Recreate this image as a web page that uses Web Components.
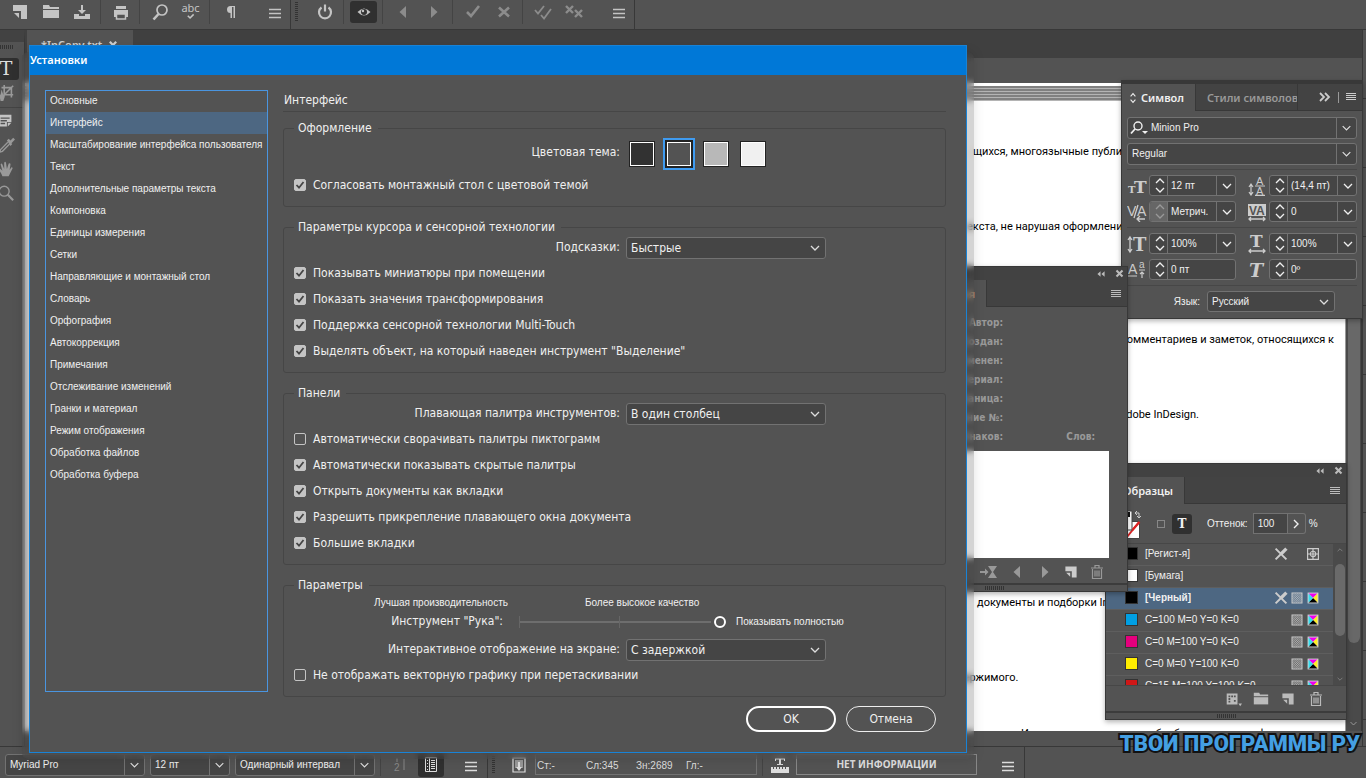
<!DOCTYPE html>
<html lang="ru">
<head>
<meta charset="utf-8">
<title>Установки — InCopy</title>
<style>
html, body { margin: 0; height: 100%; overflow: hidden; background: #535353; }
body { font: 10px/16px "Liberation Sans", sans-serif; color: #f0f0f0; }
</style>
</head>
<body>
<copy-app></copy-app>
<script>
/* Registers an element whose shadow root holds the given styles and markup. */
function define(name, css, html) {
  customElements.define(name, class extends HTMLElement {
    connectedCallback() {
      if (this.shadowRoot) return;
      const root = this.attachShadow({ mode: 'open' });
      root.innerHTML = `<style>
        *, :host { box-sizing: border-box; }
        :host { display: block; }
        button { font: inherit; color: inherit; background: none; border: 0; padding: 0; margin: 0; }
        ul { list-style: none; margin: 0; padding: 0; }
        ${css}</style>` + (typeof html === 'function' ? html(this) : html);
    }
  });
}

const ICONS = {
  page: '<path fill="currentColor" d="M3 3h14v14h-6V9H3z"/><path fill="currentColor" d="M4 11h5v5z"/>',
  folder: '<path fill="currentColor" d="M2 3h6l1 2h9v2H2z"/><path fill="currentColor" d="M2 8h16v8H2z"/>',
  save: '<path fill="currentColor" d="M2 12h5v2h6v-2h5v5H2z"/><path fill="currentColor" d="M9 3h2v5h3l-4 4-4-4h3z"/>',
  print: '<path fill="currentColor" d="M5 4h10v3H5zM3 8h14v7h-2v-3H5v3H3z"/><path fill="none" stroke="currentColor" stroke-width="1.500" d="M5.500 12h9v5h-9z"/>',
  search: '<circle cx="12" cy="8" r="5" fill="none" stroke="currentColor" stroke-width="1.700"/><path stroke="currentColor" stroke-width="2.600" d="M8.500 12L3.500 17.500"/>',
  find: '<circle cx="9" cy="8" r="4" fill="none" stroke="currentColor" stroke-width="1.400"/><path stroke="currentColor" stroke-width="1.800" d="M6 11l-4 4.500"/><path fill="currentColor" d="M13 13h6l-3 3z"/>',
  zoom: '<circle cx="8" cy="8" r="5.500" fill="none" stroke="currentColor" stroke-width="1.500"/><path stroke="currentColor" stroke-width="2.400" d="M12 12l6 6"/>',
  check: '<path fill="none" stroke="currentColor" stroke-width="2.600" d="M4 10l4 4 8-10"/>',
  tick: '<path fill="none" stroke="currentColor" stroke-width="3.500" d="M4 6l5 5 8-8"/>',
  cross: '<path fill="none" stroke="currentColor" stroke-width="2.600" d="M5 5.500l10 9M15 5.500l-10 9"/>',
  checks: '<path fill="none" stroke="currentColor" stroke-width="1.800" d="M2 8l3 3.500L11 4M8 13l3 3.500L18 7"/>',
  crosses: '<path fill="none" stroke="currentColor" stroke-width="2.400" d="M2 4l7 7M9 4l-7 7M11 8l7 7M18 8l-7 7"/>',
  pilcrow: '<path fill="currentColor" d="M15 4v12h-1.500V5H12v11h-1.500v-5A3.500 3.500 0 0 1 10.500 4z"/>',
  menu: '<path stroke="currentColor" stroke-width="1.300" d="M4 7.500h12M4 11.500h12M4 15.500h12"/>',
  lines: '<path stroke="currentColor" stroke-width="1" d="M5 6.500h10M5 8.500h10M5 10.500h10M5 12.500h10"/>',
  power: '<path fill="none" stroke="currentColor" stroke-width="2.200" d="M6.500 5.500a6 6 0 1 0 7 0M10 2.500v7"/>',
  eye: '<path fill="currentColor" d="M3.500 10Q10 3 16.500 10 10 17 3.500 10z"/><circle cx="10" cy="10" r="3" fill="#333"/><circle cx="9" cy="9" r="1.200" fill="currentColor"/>',
  left: '<path fill="currentColor" d="M13 4v12L6.500 10z"/>',
  right: '<path fill="currentColor" d="M7 4v12l6.500-6z"/>',
  chevron: '<path fill="none" stroke="currentColor" stroke-width="1.300" d="M6 8l4 4 4-4"/>',
  up: '<path fill="none" stroke="currentColor" stroke-width="1.300" d="M6 12l4-4 4 4"/>',
  next: '<path fill="none" stroke="currentColor" stroke-width="1.400" d="M8 6l4 4-4 4"/>',
  collapse: '<path fill="currentColor" d="M9.500 7v6L6 10zM14 7v6l-3.500-3z"/>',
  expand: '<path fill="none" stroke="currentColor" stroke-width="1.800" d="M5 6l4 4-4 4M10 6l4 4-4 4"/>',
  trash: '<path fill="none" stroke="currentColor" stroke-width="1.200" d="M5.500 7v9.500h9V7M4 6h12M8 5.500v-2h4v2M8 8.500v6M10 8.500v6M12 8.500v6"/>',
  merge: '<path fill="currentColor" d="M1 9h5V6.500L9.500 10 6 13.500V11H1zM9 4h9l-4 6 4 6H9l4-6z"/>',
  grid: '<path fill="currentColor" fill-rule="evenodd" d="M3 4h12v12H3zM5 6v2h2V6zm3 0v2h2V6zm3 0v2h2V6zM5 9v2h2V9zm0 3v2h2v-2zm6-1v2h2v-2z"/><path fill="currentColor" d="M16 15h4l-2 3z"/>',
  note: '<path fill="currentColor" fill-rule="evenodd" d="M2 3h14v8h-5v5H2zM4 6v1.500h10V6zm0 3v1.500h7V9zm0 3v1.500h5V12z"/><path fill="currentColor" d="M12 12h4l-4 4z"/>',
  dropper: '<path fill="currentColor" d="M11 5l2-2 2 2 3-3 2 2-4 4 1 1-2 2z"/><path fill="none" stroke="currentColor" stroke-width="1.500" d="M12 7l-8 8-1 3 3-1 8-8"/>',
  hand: '<path fill="currentColor" d="M6 18Q4 13 1 10q1-2 3 0l2 2L4 5q1-2 2 0l2 5V3q1-2 2 0l1 7 2-6q2-1 2 1l-1 6 2-3q2 0 1 2-2 4-4 8z"/>',
  crop: '<path fill="none" stroke="currentColor" stroke-width="1.800" d="M8 1v11h10M5 4h11v11M18 2L8 12"/><path fill="currentColor" d="M4 19Q3 13 1 10l3 2 1-6 2 6 2-2q0 5-2 9z"/>',
  dots: '<path fill="none" stroke="currentColor" stroke-width="1" d="M4.500 2.500h11v14h-11zM8.500 3v13"/><path stroke="currentColor" stroke-width="1" d="M6 5.500h1M6 8.500h1M6 11.500h1M6 14.500h1M10 5.500h4M10 7.500h4M10 9.500h4M10 11.500h4M10 13.500h4"/>',
  depth: '<path fill="none" stroke="currentColor" stroke-width="1.200" d="M4 3h12v14H4zM6 6h8M6 8h8M6 10h8M6 12h8"/><path fill="currentColor" d="M9 7h2v5h2l-3 4-3-4h2z"/>',
  ruler: '<path fill="currentColor" d="M1 12h2v2h1v-2h2v2h1v-2h2v2h1v-2h2v2h1v-2h2v2h1v-2h3v6H1zM5 3h10v3h-1V4.500h-3V9h2v1H7V9h2V4.500H6V6H5z"/>',
  half: '<text x="4" y="16" font-size="10" fill="currentColor">2</text><path stroke="currentColor" d="M7 3v4M14 4v11"/>',
  type: '<text x="10" y="16" text-anchor="middle" font-family="DejaVu Serif, serif" font-size="19" fill="currentColor">T</text>',
  size: '<text x="1" y="17" font-family="DejaVu Serif, serif" font-size="10" font-weight="700" fill="currentColor">T</text><text x="7" y="17" font-family="DejaVu Serif, serif" font-size="17" font-weight="700" fill="currentColor">T</text>',
  leading: '<text x="9" y="9" font-size="11" fill="currentColor">A</text><text x="9" y="19" font-size="11" fill="currentColor">A</text><path fill="none" stroke="currentColor" stroke-width="1.200" d="M8 10h10M8 19.400h10M4 9v9M2 11l2-3 2 3M2 16l2 3 2-3"/>',
  kern: '<text x="0" y="14" font-size="14" fill="currentColor">V</text><text x="10" y="14" font-size="14" fill="currentColor">A</text><path fill="none" stroke="currentColor" stroke-width="1.300" d="M11 3L7 16M18 17h-7M13 14l-3 3 3 3"/>',
  track: '<path fill="currentColor" d="M1 2h18v12H1z"/><text x="2" y="13" font-size="12" fill="#535353" font-weight="700">VA</text><path fill="none" stroke="currentColor" stroke-width="1.300" d="M2 17h16M4 15l-2 2 2 2M16 15l2 2-2 2"/>',
  vscale: '<text x="6" y="17" font-family="DejaVu Serif, serif" font-size="18" font-weight="700" fill="currentColor">T</text><path fill="none" stroke="currentColor" stroke-width="1.300" d="M3 4v13M1 6l2-3 2 3M1 15l2 3 2-3"/>',
  hscale: '<text x="3" y="13" font-family="DejaVu Serif, serif" font-size="17" font-weight="700" fill="currentColor">T</text><path fill="none" stroke="currentColor" stroke-width="1.300" d="M2 17h16M4 15l-2 2 2 2M16 15l2 2-2 2"/>',
  base: '<text x="1" y="14" font-size="14" fill="currentColor">A</text><text x="12" y="8" font-size="10" fill="currentColor">a</text><path fill="none" stroke="currentColor" stroke-width="1.200" d="M1 16h9M12 10h6M15 18v-6M13 14l2-2 2 2"/>',
  skew: '<text x="2" y="17" font-family="DejaVu Serif, serif" font-size="19" font-weight="700" font-style="italic" fill="currentColor">T</text>',
  nopen: '<path stroke="currentColor" stroke-width="3.600" d="M16 4l-6 6"/><path fill="none" stroke="currentColor" stroke-width="2.200" d="M10 10l-6 6M4 4l12 12"/>',
  target: '<path fill="none" stroke="currentColor" stroke-width="1.300" d="M4 4h12v12H4zM4 10h12M10 4v12"/><circle cx="10" cy="10" r="3" fill="none" stroke="currentColor" stroke-width="1.200"/>',
  tone: '<path fill="none" stroke="currentColor" stroke-width="1.200" d="M4.500 4.500h11v11h-11z"/><path stroke="currentColor" stroke-width="1" stroke-dasharray="1 1" d="M5 6.500h10M5 8.500h10M5 10.500h10M5 12.500h10M5 14.500h10"/><path stroke="currentColor" stroke-width="1" stroke-dasharray="1 1" stroke-dashoffset="1" d="M5 5.500h10M5 7.500h10M5 9.500h10M5 11.500h10M5 13.500h10"/>',
  cmyk: '<path fill="#d8d8d8" d="M4 4h12v12H4z"/><path fill="#e0e" d="M5 5h10l-5 5z"/><path fill="#fe2" d="M15 5v10l-5-5z"/><path d="M5 15h10l-5-5z"/><path fill="#3de" d="M5 5v10l5-5z"/>',
  sort: '<path fill="none" stroke="currentColor" stroke-width="1.300" d="M7 8l3-3.500L13 8M7 12l3 3.500 3-3.500"/>',
  close: '<path fill="none" stroke="currentColor" stroke-width="2.800" d="M6 6l8 8M14 6l-8 8"/>'
};

define('ui-icon', `
  :host { width: var(--icon, 20px); height: var(--icon, 20px); flex: none; }
  svg { display: block; width: 100%; height: 100%; font-family: "Liberation Sans", sans-serif; }
`, el => `<svg viewBox="0 0 20 20" aria-hidden="true">${ICONS[el.getAttribute('name')]}</svg>`);

/* Drop-down list. "split" draws the divider before the arrow. */
define('ui-combo', `
  :host { display: grid; grid-template-columns: 1fr 20px; height: 22px; background: #454545;
    border: 1px solid #727272; border-radius: 3px; overflow: hidden; }
  select { grid-area: 1 / 1 / 2 / 3; appearance: none; font: inherit; color: inherit; background: none;
    border: 0; margin: 0; padding: 0 20px 0 var(--combo-pad, 4px); outline: 0; min-width: 0; }
  option { background: #454545; }
  ui-icon { --icon: 20px; grid-area: 1 / 2; pointer-events: none; color: #ddd; }
  :host([split]) ui-icon { border-left: 1px solid #727272; }
`, el => `<select aria-label="${el.getAttribute('label') || ''}"><option>${el.getAttribute('value')}</option></select>
  <ui-icon name="chevron"></ui-icon>`);

/* Number field with up/down steppers and an optional drop-down. */
define('ui-stepper', `
  :host { display: flex; height: 21px; border: 1px solid #727272; border-radius: 3px; background: #454545; overflow: hidden; }
  button { display: grid; place-items: center; overflow: hidden; min-height: 0; }
  .steps { width: 18px; flex: none; display: flex; flex-direction: column; border-right: 1px solid #727272; }
  .steps button { flex: 1; }
  .steps ui-icon { --icon: 20px; margin: -6px 0; }
  :host([dim]) .steps { background: #666; color: #999; }
  input { flex: 1; min-width: 0; width: 0; font: inherit; color: inherit; background: none; border: 0; padding: 0 0 0 3px; outline: 0; }
  .drop { flex: none; width: 19px; border-left: 1px solid #727272; }
`, el => `<div class="steps"><button aria-label="Увеличить"><ui-icon name="up"></ui-icon></button>
    <button aria-label="Уменьшить"><ui-icon name="chevron"></ui-icon></button></div>
  <input aria-label="${el.getAttribute('label')}" value="${el.getAttribute('value')}">
  ${el.hasAttribute('plain') ? '' : '<button class="drop" aria-label="Список"><ui-icon name="chevron"></ui-icon></button>'}`);

/* ---------- Top toolbar ---------- */
const tool = (n, l, c = '') => `<button class="${c}" aria-label="${l}"><ui-icon name="${n}"></ui-icon></button>`;
define('app-toolbar', `
  :host { display: flex; height: 30px; background: #535353; border-bottom: 1px solid #383838; color: #c4c4c4; padding-left: 4px; }
  button { width: 31px; height: 24px; display: grid; place-items: center; }
  .dim { color: #8c8c8c; }
  .gap { margin-left: 14px; }
  .on { width: 27px; height: 22px; margin: 1px 2px; background: #303030; border-radius: 3px; }
  .spell { font: 11px/14px "Noto Sans", sans-serif; display: flex; flex-direction: column; align-items: center; justify-content: flex-start; padding-top: 1px; }
  .spell ui-icon { --icon: 9px; margin-top: -2px; }
  i { width: 1px; height: 24px; background: #444; margin: 0 4px 0 3px; }
  b { width: 1px; background: #383838; }
  .grip { width: 3px; height: 20px; margin: 2px 11px 0 4px; background: repeating-linear-gradient(#333 0 1px, transparent 1px 2px); }
`, tool('page', 'Создать') + tool('folder', 'Открыть') + tool('save', 'Сохранить') + '<i></i>' + tool('print', 'Печать') + '<i></i>'
  + tool('search', 'Найти') + '<button class="spell" aria-label="Орфография">abc<ui-icon name="tick"></ui-icon></button><i></i>'
  + tool('pilcrow', 'Непечатаемые символы') + tool('menu', 'Меню', 'gap') + '<b></b><span class="grip"></span>'
  + tool('power', 'Отслеживание') + '<i></i>' + tool('eye', 'Показать изменения', 'on') + '<i></i>'
  + tool('left', 'Назад', 'dim') + tool('right', 'Вперед', 'dim') + '<i></i>' + tool('check', 'Принять', 'dim') + tool('cross', 'Отклонить', 'dim')
  + '<i></i>' + tool('checks', 'Принять все', 'dim') + tool('crosses', 'Отклонить все', 'dim') + tool('menu', 'Меню', 'gap') + '<b></b>');

/* ---------- Left tool rail ---------- */
define('tool-rail', `
  :host { width: 25px; background: #535353; border-top: 12px solid #424242; border-right: 1px solid #383838; overflow: hidden; color: #999; }
  .grip { width: 14px; height: 4px; margin: 3px 0 9px; background: repeating-linear-gradient(90deg, #333 0 1px, transparent 1px 2px); }
  button { display: grid; place-items: center; width: 26px; height: 22px; margin: 0 0 2px -7px; --icon: 18px; border-radius: 3px; }
  .on { background: #303030; color: #ddd; --icon: 20px; }
  .lit { color: #c4c4c4; }
  hr { border: 0; border-top: 1px solid #444; margin: 3px 0 2px; }
`, '<div class="grip"></div>' + tool('type', 'Текст', 'on') + tool('crop', 'Позиция') + '<hr>' + tool('note', 'Заметка', 'lit')
  + tool('dropper', 'Пипетка') + tool('hand', 'Рука') + tool('zoom', 'Масштаб'));

/* ---------- Document ---------- */
define('doc-view', `
  :host { display: flex; flex-direction: column; min-width: 0; min-height: 0; }
  .tabs { flex: none; height: 28px; background: #404040; padding-left: 2px; }
  .tab { width: 106px; height: 100%; background: #535353; display: flex; justify-content: space-between; align-items: center;
    padding: 2px 12px 0 14px; font: 600 11px/16px "Noto Sans", sans-serif; color: #ccc; --icon: 16px; }
  .main { flex: 1; min-height: 0; padding: 25px 0 15px; display: grid; grid-template: minmax(0, 1fr) / 1fr 16px; background: #535353; }
  .page { background: #fff; color: #000; padding-top: 3px; overflow: hidden; border-right: 1px solid #999; }
  .edge { height: 15px; background: repeating-linear-gradient(#808080 0 2px, #b4b4b4 2px 3px); }
  p { margin: 0; font: 11px/15px Roboto, sans-serif; white-space: nowrap; padding-left: var(--x); padding-top: var(--y); }
  .bar { background: #4a4a4a; border-right: 1px solid #383838; display: flex; flex-direction: column; align-items: center; }
  .thumb { flex: none; width: 12px; height: 560px; border-radius: 6px; background: #686868; }
  .bar ui-icon { margin-top: auto; color: #999; --icon: 15px; }
`, `<div class="tabs"><div class="tab"><span>*InCopy.txt</span><ui-icon name="close"></ui-icon></div></div>
  <div class="main"><div class="page"><div class="edge"></div>
    <p style="--x:948px;--y:43px">щихся, многоязычные публикации</p>
    <p style="--x:942px;--y:60px">екста, не нарушая оформления</p>
    <p style="--x:1096px;--y:98px">комментариев и заметок, относящихся к</p>
    <p style="--x:1094px;--y:60px">Adobe InDesign.</p>
    <p style="--x:952px;--y:173px">документы и подборки InCopy</p>
    <p style="--x:932px;--y:60px">держимого.</p>
    <p style="--x:996px;--y:41px">Использование средств обработки текстов и форматов</p>
  </div><div class="bar"><div class="thumb"></div><ui-icon name="chevron"></ui-icon></div></div>`);

/* ---------- Floating panels ---------- */
const panelCss = `
  :host { position: absolute; background: #535353; border: 1px solid #383838; box-shadow: 0 2px 5px rgba(0,0,0,.3); }
  header { height: 13px; background: #424242; display: flex; justify-content: flex-end; align-items: center; color: #bbb; --icon: 16px; gap: 2px; }
  header :first-child { --icon: 18px; }
  header :last-child { --icon: 15px; }
  .tabs { display: flex; height: 27px; background: #434343; border-bottom: 1px solid #383838; }
  .tab { background: #535353; height: 27px; display: flex; align-items: center; font: 600 11px/16px "Noto Sans", sans-serif; }
  .tabs .menu { margin: 4px 1px 0 auto; color: #bbb; }
  .grip { border-top: 2px solid #3c3c3c; height: 8px; display: grid; justify-content: center; align-items: center; }
  .grip i { width: 19px; height: 4px; background: repeating-linear-gradient(90deg, #333 0 1px, transparent 1px 2px); }
  footer { display: flex; color: #bbb; }
`;

define('symbol-panel', panelCss + `
  :host { top: 80px; right: 3px; width: 242px; height: 239px; border-top-width: 4px; display: flex; flex-direction: column; }
  .tab { width: 73px; padding-left: 3px; --icon: 16px; }
  .off { background: none; border-right: 1px solid #383838; border-left: 1px solid #383838; width: 103px; padding-left: 11px; color: #999; white-space: nowrap; overflow: hidden; }
  .ctl { margin-left: auto; display: flex; align-items: center; color: #ccc; padding-right: 1px; }
  .ctl .bar { width: 1px; height: 11px; background: #999; margin: 0 2px 0 3px; }
  .body { padding: 6px 5px; }
  .font { display: grid; margin-bottom: 4px; }
  .font ui-combo { grid-area: 1 / 1; }
  .font > ui-icon { grid-area: 1 / 1; z-index: 1; pointer-events: none; align-self: center; margin-left: 2px; }
  .grid { display: grid; grid-template-columns: 18px 87px 25px 88px; column-gap: 4px; row-gap: 5px; align-items: center;
    border-top: 1px solid #474747; padding: 5px 0; --icon: 20px; color: #ccc; }
  .grid ui-stepper { color: #f0f0f0; }
  .grid :nth-child(4n + 3) { margin-left: 7px; }
  .lang { border-top: 1px solid #474747; padding-top: 5px; display: flex; align-items: center; justify-content: flex-end; gap: 7px; padding-right: 22px; }
  .lang ui-combo { width: 128px; height: 21px; }
`, `<div class="tabs"><div class="tab"><ui-icon name="sort"></ui-icon>Символ</div><div class="tab off">Стили символов</div>
    <div class="ctl"><ui-icon name="expand"></ui-icon><span class="bar"></span><ui-icon name="lines"></ui-icon></div></div>
  <div class="body">
    <div class="font" style="--combo-pad:23px"><ui-icon name="find"></ui-icon><ui-combo split label="Шрифт" value="Minion Pro"></ui-combo></div>
    <div class="font"><ui-combo split label="Начертание" value="Regular"></ui-combo></div>
    <div class="grid">
      <ui-icon name="size"></ui-icon><ui-stepper label="Кегль" value="12 пт"></ui-stepper>
      <ui-icon name="leading"></ui-icon><ui-stepper label="Интерлиньяж" value="(14,4 пт)"></ui-stepper>
      <ui-icon name="kern"></ui-icon><ui-stepper dim label="Кернинг" value="Метрич."></ui-stepper>
      <ui-icon name="track"></ui-icon><ui-stepper label="Трекинг" value="0"></ui-stepper>
    </div>
    <div class="grid">
      <ui-icon name="vscale"></ui-icon><ui-stepper label="Масштаб по вертикали" value="100%"></ui-stepper>
      <ui-icon name="hscale"></ui-icon><ui-stepper label="Масштаб по горизонтали" value="100%"></ui-stepper>
      <ui-icon name="base"></ui-icon><ui-stepper plain label="Смещение" value="0 пт"></ui-stepper>
      <ui-icon name="skew"></ui-icon><ui-stepper plain label="Наклон" value="0º"></ui-stepper>
    </div>
    <div class="lang"><span>Язык:</span><ui-combo label="Язык" value="Русский"></ui-combo></div>
  </div>`);

define('info-panel', panelCss + `
  :host { top: 266px; left: 860px; width: 268px; height: 326px; display: flex; flex-direction: column; }
  .tab { width: 126px; border-right: 1px solid #383838; justify-content: flex-end; padding-right: 11px; color: #c8a888; }
  dl { margin: 0; padding: 6px 0 5px; display: grid; grid-template-columns: 142px 92px; font: 700 10px/19px "DejaVu Sans Condensed", sans-serif; color: #999; text-align: right; }
  dt { grid-column: 1; } dt.two { grid-column: 2; }
  textarea { display: block; width: 230px; height: 107px; margin: 0 0 0 18px; border: 0; padding: 0; resize: none; background: #fff; }
  footer { flex: 1; padding: 2px 20px 0 0; justify-content: flex-end; align-items: center; gap: 8px; color: #999; }
  footer :nth-child(4) { color: #ccc; --icon: 16px; }
`, `<header><ui-icon name="collapse"></ui-icon><ui-icon name="close"></ui-icon></header>
  <div class="tabs"><div class="tab">Задания</div><ui-icon class="menu" name="lines"></ui-icon></div>
  <dl><dt>Автор:</dt><dt>Создан:</dt><dt>Изменен:</dt><dt>Материал:</dt><dt>Страница:</dt><dt>Задание №:</dt><dt>Знаков:</dt><dt class="two">Слов:</dt></dl>
  <textarea aria-label="Описание"></textarea>
  <footer><ui-icon name="merge"></ui-icon><ui-icon name="left"></ui-icon><ui-icon name="right"></ui-icon><ui-icon name="page"></ui-icon><ui-icon name="trash"></ui-icon></footer>
  <div class="grip"><i></i></div>`);

const swatch = (c, n, icons, cls = '') => `<li class="${cls}"><i style="background:${c}"></i><span>${n}</span>${icons.split(' ').filter(Boolean).map(x => `<ui-icon name="${x}"></ui-icon>`).join('')}</li>`;
define('swatches-panel', panelCss + `
  :host { top: 463px; right: 19px; width: 242px; height: 257px; display: flex; flex-direction: column; }
  .tab { width: 79px; border-right: 1px solid #383838; justify-content: flex-end; padding-right: 11px; }
  .opts { height: 39px; flex: none; display: flex; align-items: center; padding-left: 5px; }
  .opts svg { width: 32px; height: 30px; }
  .frame { width: 8px; height: 8px; border: 1px solid #888; margin: 0 7px 0 14px; }
  .t { width: 20px; height: 20px; background: #303030; border-radius: 3px; font: 700 12px/20px "DejaVu Serif", serif; text-align: center; margin-right: 15px; }
  input { width: 35px; height: 21px; margin-left: 5px; border: 1px solid #727272; background: #454545; color: inherit; font: inherit; padding: 0 4px; }
  .go { width: 18px; height: 21px; border: 1px solid #727272; border-left: 0; border-radius: 0 3px 3px 0; margin-right: 3px; display: grid; place-items: center; overflow: hidden; }
  .go ui-icon { margin: 0 -2px; }
  .list { flex: 1; min-height: 0; display: flex; border-top: 1px solid #474747; border-bottom: 1px solid #474747; }
  ul { flex: 1; overflow: hidden; }
  li { height: 22px; display: flex; align-items: center; padding: 0 11px 2px 19px; border-bottom: 1px solid #5e5e5e; color: #ccc; --icon: 18px; }
  li ui-icon { margin-left: -2px; }
  li span { color: #f0f0f0; margin-right: auto; padding-left: 7px; }
  li i { width: 13px; height: 13px; border: 1px solid #333; }
  .on { background: #4d6782; font-weight: 700; }
  .reg ui-icon:nth-of-type(1) { margin-right: 16px; }
  .bar { width: 13px; background: #4a4a4a; display: flex; flex-direction: column; align-items: center; justify-content: space-between; --icon: 12px; color: #888; }
  .bar b { width: 10px; height: 72px; border-radius: 5px; background: #6a6a6a; margin-bottom: 36px; margin-top: 6px; }
  footer { height: 25px; align-items: center; justify-content: flex-end; gap: 10px; padding-right: 20px; --icon: 18px; }
  footer :nth-child(3) { --icon: 16px; }
  footer :last-child { --icon: 20px; }
`, `<header><ui-icon name="collapse"></ui-icon><ui-icon name="close"></ui-icon></header>
  <div class="tabs"><div class="tab">Образцы</div><ui-icon class="menu" name="lines"></ui-icon></div>
  <div class="opts"><svg viewBox="0 0 32 30" aria-hidden="true"><path fill="#fff" stroke="#444" d="M16.500 12.500h12v17h-12z"/><path stroke="#d22" stroke-width="2" d="M16 28L28 13"/><path fill="#fff" stroke="#444" d="M3 2h18v19H3z"/><path fill="#111" d="M6 3h13v5H6z"/><path stroke="#d22" stroke-width="2" d="M21.500 21l7-8"/><path fill="none" stroke="#ccc" d="M24 4h4v5M26 2l-2 2 2 2M26 7l2 2 2-2"/></svg>
    <span class="frame"></span><span class="t">T</span><label for="tint">Оттенок:</label><input id="tint" value="100"><button class="go" aria-label="Изменить"><ui-icon name="next"></ui-icon></button>%</div>
  <div class="list"><ul>${swatch('#000', '[Регист-я]', 'nopen target', 'reg') + swatch('#fff', '[Бумага]', '') + swatch('#000', '[Черный]', 'nopen tone cmyk', 'on')
    + swatch('#009fe3', 'C=100 M=0 Y=0 K=0', 'tone cmyk') + swatch('#e5007d', 'C=0 M=100 Y=0 K=0', 'tone cmyk') + swatch('#ffed00', 'C=0 M=0 Y=100 K=0', 'tone cmyk') + swatch('#d01717', 'C=15 M=100 Y=100 K=0', 'tone cmyk')}</ul>
    <div class="bar"><ui-icon name="up"></ui-icon><b></b><ui-icon name="chevron"></ui-icon></div></div>
  <footer><ui-icon name="grid"></ui-icon><ui-icon name="folder"></ui-icon><ui-icon name="page"></ui-icon><ui-icon name="trash"></ui-icon></footer>
  <div class="grip"><i></i></div>`);

/* ---------- Preferences dialog ---------- */
define('pref-group', `
  fieldset { margin: 0; border: 1px solid #464646; border-radius: 3px; padding: 2px 0 8px; min-width: 0; }
  legend { height: 16px; line-height: 16px; margin-left: 10px; padding: 0 6px 0 4px; }
`, el => `<fieldset><legend>${el.getAttribute('heading')}</legend><slot></slot></fieldset>`);

define('pref-check', `
  label { display: flex; align-items: center; gap: 7px; height: 26px; padding-left: 10px; }
  span { display: grid; width: 12px; height: 12px; }
  input { grid-area: 1 / 1; appearance: none; margin: 0; width: 12px; height: 12px; border: 1px solid #c4c4c4; border-radius: 2px; }
  input:checked { background: #c4c4c4; }
  svg { grid-area: 1 / 1; width: 12px; height: 12px; pointer-events: none; visibility: hidden; }
  input:checked + svg { visibility: visible; }
`, el => `<label><span><input type="checkbox"${el.hasAttribute('checked') ? ' checked' : ''}><svg viewBox="0 0 12 12"><path fill="none" stroke="#444" stroke-width="1.800" d="M2.500 6l2.500 2.700L9.500 3"/></svg></span><slot></slot></label>`);

define('pref-choice', `
  :host { display: grid; grid-template-columns: 336px 200px; column-gap: 6px; height: 23px; }
  span { text-align: right; line-height: 21px; }
`, el => `<span>${el.getAttribute('label')}</span><ui-combo label="${el.getAttribute('label')}" value="${el.getAttribute('value')}"></ui-combo>`);

define('theme-picker', `
  :host { height: 34px; display: flex; align-items: center; }
  .l { width: 336px; text-align: right; margin-right: 9px; line-height: 28px; align-self: start; }
  input { appearance: none; width: 26px; height: 26px; margin: 0 11px 2px 0; border: 1px solid #222; box-shadow: inset 0 0 0 1px #fff; background: var(--c); }
  input:checked { box-shadow: inset 0 0 0 1px #fff, 0 0 0 1px #222, 0 0 0 3px #3f9bf0; }
`, `<span class="l">Цветовая тема:</span>
  <input type="radio" name="t" aria-label="Темная" style="--c:#323232"><input type="radio" name="t" aria-label="Умеренно темная" checked style="--c:#535353">
  <input type="radio" name="t" aria-label="Умеренно светлая" style="--c:#b8b8b8"><input type="radio" name="t" aria-label="Светлая" style="--c:#f0f0f0">`);

define('hand-slider', `
  :host { height: 44px; }
  .top { display: flex; height: 16px; gap: 77px; padding-left: 90px; }
  .top, .end { font: 10px/16px "Liberation Sans", sans-serif; }
  .row { display: flex; align-items: center; height: 22px; }
  label { width: 219px; text-align: right; line-height: 18px; padding-bottom: 2px; }
  input { appearance: none; width: 207px; height: 12px; margin: 0 10px 0 16px;
    background: linear-gradient(#666 0 0) 0 0 / 1px 100% no-repeat, linear-gradient(#666 0 0) 100px 0 / 1px 100% no-repeat, linear-gradient(#6e6e6e 0 0) 0 5px / 192px 2px no-repeat; }
  input::-webkit-slider-thumb { appearance: none; width: 12px; height: 12px; border-radius: 50%; border: 2px solid #fff; background: #535353; }
`, `<div class="top"><span>Лучшая производительность</span><span>Более высокое качество</span></div>
  <div class="row"><label for="hand">Инструмент "Рука":</label><input id="hand" type="range" min="0" max="2" value="2"><span class="end">Показывать полностью</span></div>`);

define('pref-dialog', `
  :host { position: absolute; top: 45px; left: 29px; width: 938px; font: 12px/16px "DejaVu Sans Condensed", sans-serif; }
  :host::before { content: ""; position: absolute; inset: 7px -7px -6px; border-radius: 6px; background: rgba(60,60,60,.22); backdrop-filter: blur(3px); box-shadow: 0 0 12px rgba(0,0,0,.12); }
  section { position: relative; background: #535353; border: 1px solid #1883d7; padding-bottom: 20px; }
  h1 { margin: 0; height: 29px; background: #0078d7; font: 600 11px/28px "Noto Sans", sans-serif; color: #fff; }
  .cols { display: grid; grid-template-columns: 223px 1fr; gap: 15px; padding: 15px 20px 0 15px; }
  nav { border: 1px solid #4a95e0; height: 602px; font: 10px/22px "Liberation Sans", sans-serif; }
  nav a { display: block; color: inherit; text-decoration: none; padding-left: 4px; height: 22px; white-space: nowrap; }
  nav a:first-of-type { height: 21px; line-height: 20px; }
  nav .on { background: #4d6782; }
  h2 { margin: 0 0 8px; font: inherit; height: 22px; line-height: 20px; padding-left: 1px; border-bottom: 1px solid #464646; }
  .groups { display: grid; gap: 12px; }
  .acts { display: flex; justify-content: flex-end; gap: 10px; padding-right: 30px; margin-top: 9px; }
  .acts button { width: 90px; height: 26px; border: 1px solid #eee; border-radius: 13px; }
  .acts button:first-child { border: 2px solid #fff; }
`, `<section role="dialog" aria-label="Установки"><h1>Установки</h1><div class="cols">
  <nav>${['Основные', 'Интерфейс', 'Масштабирование интерфейса пользователя', 'Текст', 'Дополнительные параметры текста', 'Компоновка', 'Единицы измерения', 'Сетки', 'Направляющие и монтажный стол', 'Словарь', 'Орфография', 'Автокоррекция', 'Примечания', 'Отслеживание изменений', 'Гранки и материал', 'Режим отображения', 'Обработка файлов', 'Обработка буфера'].map((t, i) => `<a href="#"${i === 1 ? ' class="on"' : ''}>${t}</a>`).join('')}</nav>
  <div><h2>Интерфейс</h2><div class="groups">
    <pref-group heading="Оформление"><theme-picker></theme-picker><pref-check checked>Согласовать монтажный стол с цветовой темой</pref-check></pref-group>
    <pref-group heading="Параметры курсора и сенсорной технологии"><pref-choice label="Подсказки:" value="Быстрые"></pref-choice>
      <pref-check checked>Показывать миниатюры при помещении</pref-check><pref-check checked>Показать значения трансформирования</pref-check>
      <pref-check checked>Поддержка сенсорной технологии Multi-Touch</pref-check><pref-check checked>Выделять объект, на который наведен инструмент "Выделение"</pref-check></pref-group>
    <pref-group heading="Панели"><pref-choice label="Плавающая палитра инструментов:" value="В один столбец"></pref-choice>
      <pref-check>Автоматически сворачивать палитры пиктограмм</pref-check><pref-check checked>Автоматически показывать скрытые палитры</pref-check>
      <pref-check checked>Открыть документы как вкладки</pref-check><pref-check checked>Разрешить прикрепление плавающего окна документа</pref-check><pref-check checked>Большие вкладки</pref-check></pref-group>
    <pref-group heading="Параметры"><hand-slider></hand-slider><pref-choice label="Интерактивное отображение на экране:" value="С задержкой"></pref-choice>
      <pref-check>Не отображать векторную графику при перетаскивании</pref-check></pref-group>
  </div></div></div>
  <div class="acts"><button>OK</button><button>Отмена</button></div></section>`);

/* ---------- Status bar ---------- */
define('status-bar', `
  :host { display: flex; align-items: center; height: 32px; background: #535353; border-top: 1px solid #383838; padding: 4px 0 0 5px; color: #ddd; }
  ui-combo { color: #f0f0f0; margin-right: 5px; }
  i { width: 1px; height: 22px; background: #444; }
  b { width: 1px; background: #383838; align-self: stretch; margin-top: -4px; }
  .grip { width: 3px; height: 18px; margin: 0 14px 0 4px; background: repeating-linear-gradient(#333 0 1px, transparent 1px 2px); }
  .half { color: #888; margin: 0 8px 0 9px; }
  .on { width: 26px; height: 24px; background: #303030; border-radius: 3px; display: grid; place-items: center; margin-right: 17px; }
  .stats { display: grid; grid-template-columns: 49px 50px 50px 1fr; width: 222px; height: 21px; line-height: 21px; border: 1px solid #727272; padding-left: 1px; margin: 0 5px 0 6px; }
  .info { width: 181px; height: 21px; border: 1px solid #888; text-align: center; font: 700 10px/19px "Noto Sans", sans-serif; margin: 0 21px 0 6px; }
`, `<ui-combo split label="Шрифт" value="Myriad Pro" style="width:140px"></ui-combo><ui-combo split label="Кегль" value="12 пт" style="width:80px"></ui-combo>
  <ui-combo split label="Интервал" value="Одинарный интервал" style="width:140px"></ui-combo><i></i><ui-icon class="half" name="half"></ui-icon>
  <button class="on" aria-label="Номера строк"><ui-icon name="dots"></ui-icon></button><ui-icon name="menu"></ui-icon><b style="margin-left:6px"></b><span class="grip"></span>
  <ui-icon name="depth"></ui-icon><div class="stats"><span>Ст:-</span><span>Сл:345</span><span>Зн:2689</span><span>Гл:-</span></div><i style="margin-right:7px"></i>
  <ui-icon name="ruler"></ui-icon><div class="info">НЕТ ИНФОРМАЦИИ</div><ui-icon name="menu"></ui-icon><b style="margin-left:6px"></b>`);

define('copy-app', `
  :host { position: relative; display: grid; grid-template-rows: auto minmax(0, 1fr) auto; height: 100vh; overflow: hidden; background: #535353; }
  .work { display: grid; grid-template: minmax(0, 1fr) / 25px 1fr 4px; }
  .dock { border-left: 1px solid #383838; background: repeating-linear-gradient(#535353 0 68px, #383838 68px 69px); }
  .mark { position: absolute; right: 6px; bottom: 20px; font: 900 22px/28px Roboto, sans-serif; color: #449fe2; -webkit-text-stroke: 4px #111; paint-order: stroke fill; }
`, `<app-toolbar></app-toolbar>
  <div class="work"><tool-rail></tool-rail><doc-view></doc-view><div class="dock"></div></div>
  <status-bar></status-bar>
  <symbol-panel></symbol-panel><swatches-panel></swatches-panel><info-panel></info-panel><pref-dialog></pref-dialog>
  <span class="mark">ТВОИ ПРОГРАММЫ РУ</span>`);
</script>
</body>
</html>
